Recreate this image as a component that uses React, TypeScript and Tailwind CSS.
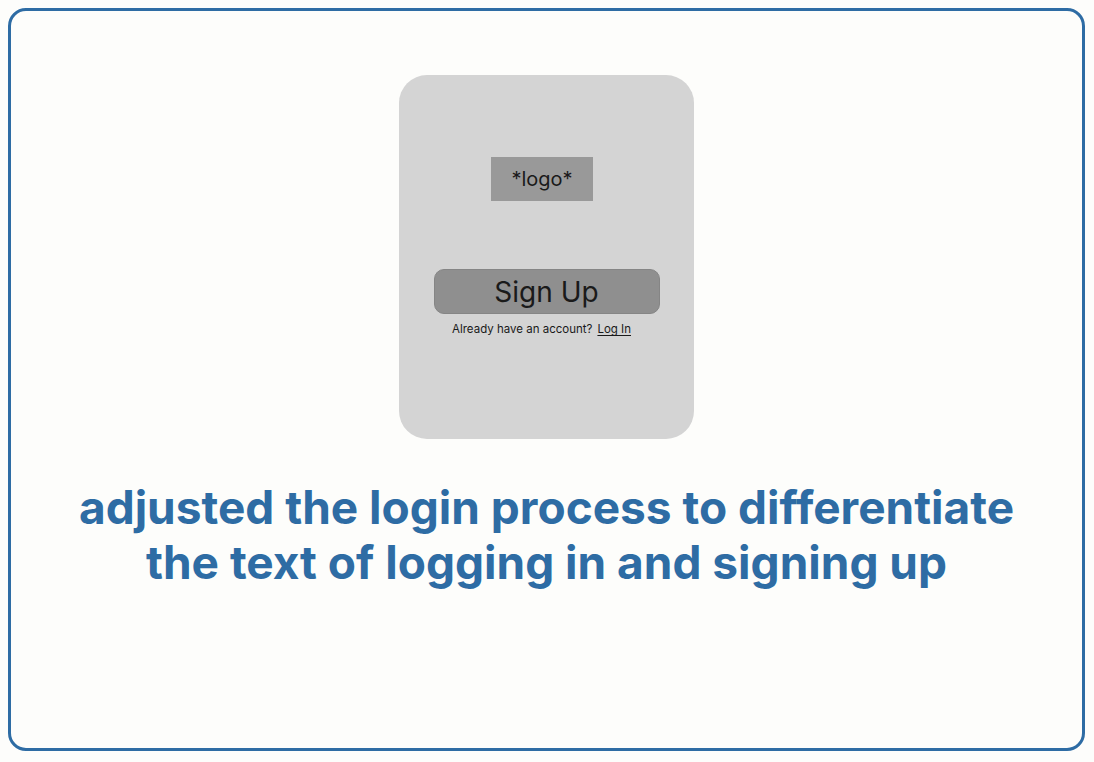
export default function App() {
  return (
    <div className="w-[1094px] h-[762px] bg-[#fdfdfb] p-2" style={{ fontFamily: 'Inter, "Noto Sans", sans-serif' }}>
      <div className="h-[743px] w-[1077px] border-[3px] border-[#2e6ca4] rounded-[18px] flex flex-col items-center pt-[64px]">
        {/* Phone mock */}
        <div className="w-[295px] h-[364px] bg-[#d4d4d4] rounded-[28px] flex flex-col items-center pt-[82px]">
          <div className="mr-[9px] w-[102px] h-[44px] bg-[#999999] flex items-center justify-center text-[20px] text-[#1a1a1a]">
            *logo*
          </div>
          <div className="mt-[68px] w-[226px] h-[45px] bg-[#8f8f8f] rounded-[10px] border border-[#858585] flex items-center justify-center text-[28px] text-[#1a1a1a]">
            Sign Up
          </div>
          <div className="mt-[7px] mr-[10px] text-[11.5px] text-[#1a1a1a] flex gap-[5px]">
            <span>Already have an account?</span>
            <span className="underline underline-offset-2">Log In</span>
          </div>
        </div>
        {/* Caption */}
        <div className="mt-[41px] text-center text-[46px] leading-[55px] font-bold text-[#2e6ca4]">
          adjusted the login process to differentiate
          <br />
          the text of logging in and signing up
        </div>
      </div>
    </div>
  );
}
